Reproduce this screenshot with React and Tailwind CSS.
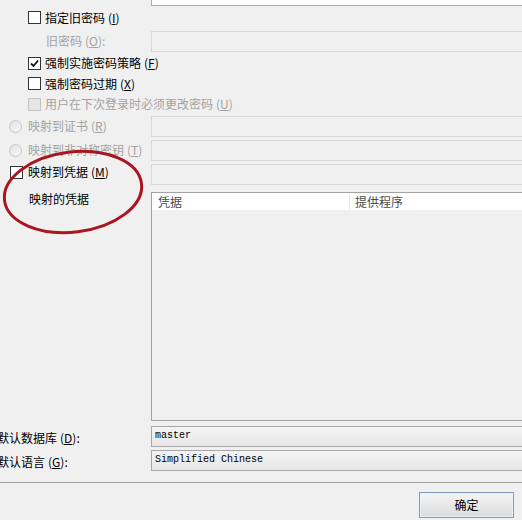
import React from 'react';

const font = { fontFamily: '"SimSun", "Noto Sans CJK SC", "Noto Sans", sans-serif' };

function Key({ k }) {
  return (
    <span className="ml-[3px]">
      (<span className="underline">{k}</span>)
    </span>
  );
}

function CheckBox({ checked, disabled }) {
  return (
    <span
      className={
        'flex h-[13px] w-[13px] shrink-0 items-center justify-center border ' +
        (disabled ? 'border-[#c4c4c4] bg-[#e6e6e6]' : 'border-[#333333] bg-white')
      }
    >
      {checked && (
        <svg width="9" height="9" viewBox="0 0 9 9">
          <path d="M1 4.5 L3.5 7 L8 1.5" fill="none" stroke="#111" strokeWidth="1.8" />
        </svg>
      )}
    </span>
  );
}

function Radio() {
  return (
    <span className="h-[13px] w-[13px] shrink-0 rounded-full border border-[#c9c9c9] bg-gradient-to-br from-[#e2e2e2] to-[#f6f6f6]" />
  );
}

function Field({ children, enabled }) {
  return (
    <div
      className={
        'flex h-[21px] w-full items-center border pl-[3px] ' +
        (enabled ? 'border-[#a7a7a7] bg-gradient-to-b from-[#f4f4f4] to-[#e6e6e6]' : 'border-[#d7d7d7] bg-[#f0f0f0]')
      }
    >
      {children}
    </div>
  );
}

function Row({ h, left, right }) {
  return (
    <div className={'flex items-center ' + h}>
      <div className="flex w-[151px] shrink-0 items-center">{left}</div>
      <div className="mr-[-4px] flex flex-1 items-center">{right}</div>
    </div>
  );
}

export default function App() {
  return (
    <div className="relative h-[520px] w-[522px] overflow-hidden bg-[#f0f0f0] text-[12px] leading-[14px] text-black" style={font}>
      <Row h="h-[6px]" left={null} right={<div className="h-[6px] w-full border-b border-l border-[#a9abb0] bg-white" />} />

      <Row
        h="h-[23px]"
        left={
          <div className="flex items-center gap-[4px] pl-[28px]">
            <CheckBox />
            <span>指定旧密码<Key k="I" /></span>
          </div>
        }
      />
      <Row
        h="h-[24px]"
        left={<span className="pl-[46px] text-[#a3a3a3]">旧密码<Key k="O" />:</span>}
        right={<Field />}
      />
      <Row
        h="h-[20px]"
        left={
          <div className="flex items-center gap-[4px] pl-[28px] whitespace-nowrap">
            <CheckBox checked />
            <span>强制实施密码策略<Key k="F" /></span>
          </div>
        }
      />
      <Row
        h="h-[21px]"
        left={
          <div className="flex items-center gap-[4px] pl-[28px] whitespace-nowrap">
            <CheckBox />
            <span>强制密码过期<Key k="X" /></span>
          </div>
        }
      />
      <Row
        h="h-[20px]"
        left={
          <div className="flex items-center gap-[4px] pl-[28px] whitespace-nowrap text-[#a3a3a3]">
            <CheckBox disabled />
            <span>用户在下次登录时必须更改密码<Key k="U" /></span>
          </div>
        }
      />
      <Row
        h="h-[24px]"
        left={
          <div className="flex items-center gap-[6px] pl-[9px] text-[#a3a3a3]">
            <Radio />
            <span>映射到证书<Key k="R" /></span>
          </div>
        }
        right={<Field />}
      />
      <Row
        h="h-[24px]"
        left={
          <div className="flex items-center gap-[6px] pl-[9px] whitespace-nowrap text-[#a3a3a3]">
            <Radio />
            <span>映射到非对称密钥<Key k="T" /></span>
          </div>
        }
        right={<Field />}
      />
      <Row
        h="h-[24px]"
        left={
          <div className="-mt-[4px] flex items-center gap-[5px] pl-[10px]">
            <CheckBox />
            <span>映射到凭据<Key k="M" /></span>
          </div>
        }
        right={<Field />}
      />

      <div className="mt-[6px] flex h-[229px]">
        <div className="w-[151px] shrink-0 pl-[29px] pt-[0px]">映射的凭据</div>
        <div className="mr-[-4px] flex flex-1 flex-col border border-[#a3a3a3] bg-[#f0f0f0]">
          <div className="flex h-[17px] items-center bg-white text-[#4a4a4a]">
            <div className="w-[198px] border-r border-[#e3e3e3] pl-[6px]">凭据</div>
            <div className="pl-[5px]">提供程序</div>
          </div>
        </div>
      </div>

      <div className="mt-[3px]" />
      <Row
        h="h-[24px]"
        left={<span className="-ml-[3px] pt-[3px] whitespace-nowrap">默认数据库<Key k="D" />:</span>}
        right={
          <Field enabled>
            <span className="font-['Liberation_Mono',monospace] text-[10px]">master</span>
          </Field>
        }
      />
      <Row
        h="h-[24px]"
        left={<span className="-ml-[3px] pt-[3px] whitespace-nowrap">默认语言<Key k="G" />:</span>}
        right={
          <Field enabled>
            <span className="font-['Liberation_Mono',monospace] text-[10px]">Simplified Chinese</span>
          </Field>
        }
      />

      <div className="mt-[10px] border-t border-[#a0a0a0]" />
      <div className="flex justify-end pr-[8px] pt-[9px]">
        <button className="flex h-[26px] w-[95px] items-center justify-center border border-[#7d9ec0] bg-gradient-to-b from-[#f4f4f4] to-[#dcdcdc] shadow-[inset_0_0_0_1px_#e8f2fb]">
          确定
        </button>
      </div>

      <svg className="pointer-events-none absolute left-0 top-[140px]" width="160" height="100" viewBox="0 0 160 100">
        <ellipse cx="73" cy="52" rx="69" ry="40" transform="rotate(-7 73 52)" fill="none" stroke="#a8161f" strokeWidth="3" />
      </svg>
    </div>
  );
}
